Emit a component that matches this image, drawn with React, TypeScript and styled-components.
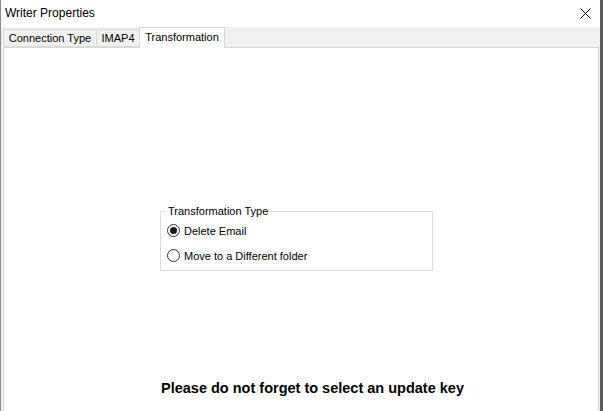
import React, { useState } from 'react';
import styled, { createGlobalStyle } from 'styled-components';

const GlobalStyle = createGlobalStyle`
  html, body {
    margin: 0;
    padding: 0;
    background: #fff;
  }
  body {
    font-family: 'Liberation Sans', Arial, sans-serif;
    color: #000;
  }
`;

const tabs = [
  { label: 'Connection Type', width: 94 },
  { label: 'IMAP4', width: 44 },
  { label: 'Transformation', width: 86 }
];
const options = ['Delete Email', 'Move to a Different folder'];

export default function App() {
  const [active, setActive] = useState(2);
  const [choice, setChoice] = useState(0);

  return (
    <>
      <GlobalStyle />
      <Window>
        <TitleBar>
          <Title>Writer Properties</Title>
          <CloseButton aria-label="Close">
            <svg width="11" height="11" viewBox="0 0 11 11">
              <path d="M0.5 0.5 L10.5 10.5 M10.5 0.5 L0.5 10.5" stroke="#000" strokeWidth="1" />
            </svg>
          </CloseButton>
        </TitleBar>
        <Body>
          <TabStrip>
            {tabs.map((tab, i) => (
              <Tab
                key={tab.label}
                $active={i === active}
                $width={tab.width}
                onClick={() => setActive(i)}>
                {tab.label}
              </Tab>
            ))}
          </TabStrip>
          <Panel>
            <GroupBox>
              <Legend>Transformation Type</Legend>
              {options.map((label, i) => (
                <RadioRow key={label} onClick={() => setChoice(i)}>
                  <RadioCircle $checked={i === choice} />
                  {label}
                </RadioRow>
              ))}
            </GroupBox>
            <Notice>Please do not forget to select an update key</Notice>
          </Panel>
        </Body>
      </Window>
    </>
  );
}

const Window = styled.div`
  width: 603px;
  height: 411px;
  box-sizing: border-box;
  display: flex;
  flex-direction: column;
  background: #fff;
  border-left: 1px solid #8a8a8a;
  border-right: 3px solid #5c5c5c;
  overflow: hidden;
`;

const TitleBar = styled.div`
  height: 27px;
  flex: none;
  display: flex;
  align-items: center;
  justify-content: space-between;
  padding: 0 9px 0 4px;
  background: #fff;
`;

const Title = styled.span`
  font-size: 12px;
  color: #000;
  margin-top: -1px;
`;

const CloseButton = styled.div`
  width: 11px;
  height: 11px;
  display: flex;
  margin-top: -1px;
`;

const Body = styled.div`
  flex: 1;
  display: flex;
  flex-direction: column;
  background: #f0f0f0;
  padding: 0 1px 0 2px;
  min-height: 0;
`;

const TabStrip = styled.div`
  height: 20px;
  flex: none;
  display: flex;
  align-items: flex-end;
  position: relative;
  z-index: 1;
`;

const Tab = styled.div<{ $active: boolean; $width: number }>`
  box-sizing: border-box;
  width: ${(p) => p.$width}px;
  height: ${(p) => (p.$active ? '21px' : '18px')};
  margin-bottom: ${(p) => (p.$active ? '-1px' : '0')};
  padding-bottom: ${(p) => (p.$active ? '3px' : '0')};
  display: flex;
  align-items: center;
  justify-content: center;
  font-size: 11px;
  white-space: nowrap;
  background: ${(p) => (p.$active ? '#fff' : '#f0f0f0')};
  border: 1px solid #d9d9d9;
  border-bottom: ${(p) => (p.$active ? 'none' : '1px solid #d9d9d9')};
  margin-right: -1px;
  cursor: default;
`;

const Panel = styled.div`
  flex: 1;
  background: #fff;
  border: 1px solid #d9d9d9;
  border-bottom: none;
  display: flex;
  flex-direction: column;
  align-items: flex-start;
  padding: 157px 0 0 156px;
`;

const GroupBox = styled.fieldset`
  box-sizing: border-box;
  width: 273px;
  height: 66px;
  margin: 0;
  padding: 6px 0 0 6px;
  border: 1px solid #dcdcdc;
  display: flex;
  flex-direction: column;
  gap: 12px;
`;

const Legend = styled.legend`
  font-size: 11px;
  padding: 0 1px 0 1px;
  margin-left: 0;
  line-height: 13px;
`;

const RadioRow = styled.label`
  display: flex;
  align-items: center;
  gap: 4px;
  font-size: 11px;
  height: 13px;
  cursor: default;
`;

const RadioCircle = styled.span<{ $checked: boolean }>`
  box-sizing: border-box;
  width: 13px;
  height: 13px;
  border-radius: 50%;
  border: 1px solid #333;
  background: #fff;
  display: flex;
  align-items: center;
  justify-content: center;
  &::after {
    content: '';
    width: 7px;
    height: 7px;
    border-radius: 50%;
    background: ${(p) => (p.$checked ? '#1a1a1a' : 'transparent')};
  }
`;

const Notice = styled.div`
  margin-top: auto;
  margin-bottom: 15px;
  margin-left: 1px;
  font-size: 14.5px;
  font-weight: bold;
`;
